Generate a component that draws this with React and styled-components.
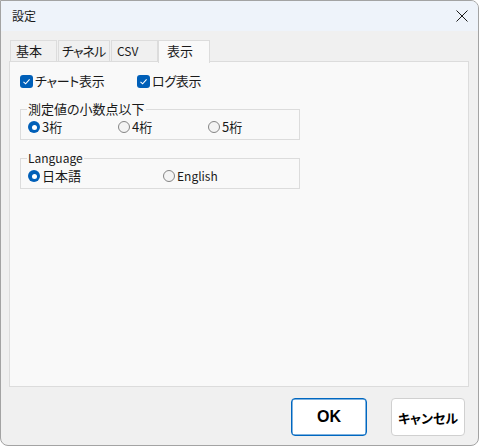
import React from "react"
import styled, { createGlobalStyle } from "styled-components"

const Global = createGlobalStyle`
  html, body { margin: 0; padding: 0; background: #ffffff; }
  body {
    font-family: "Noto Sans CJK JP", "Noto Sans", sans-serif;
    font-size: 13px;
    font-feature-settings: "palt";
    color: #1a1a1a;
  }
  button { font-feature-settings: "palt"; }
`

const Window = styled.div`
  width: 479px;
  height: 446px;
  box-sizing: border-box;
  border: 1px solid #a3a3a3;
  border-radius: 0 8px 8px 8px;
  background: #f0f0f0;
  overflow: hidden;
  display: flex;
  flex-direction: column;
`

const TitleBar = styled.div`
  height: 30px;
  flex: none;
  background: #eef3fa;
  display: flex;
  align-items: center;
  justify-content: space-between;
  padding: 0 9px 0 11px;
`

const Title = styled.span`
  font-size: 12px;
  line-height: 14px;
`

const CloseButton = styled.button`
  border: none;
  background: none;
  padding: 0;
  width: 14px;
  height: 14px;
  display: flex;
  align-items: center;
  justify-content: center;
`

const Body = styled.div`
  flex: 1;
  display: flex;
  flex-direction: column;
  padding: 9px 9px 9px 8px;
`

const TabStrip = styled.div`
  display: flex;
  align-items: flex-end;
  padding-left: 1px;
  height: 21px;
`

const Tab = styled.div`
  width: ${p => p.$w}px;
  box-sizing: border-box;
  height: ${p => (p.$active ? 23 : 21)}px;
  margin-left: ${p => (p.$active ? -1 : 0)}px;
  margin-bottom: ${p => (p.$active ? -2 : 0)}px;
  padding: ${p => (p.$active ? "2px 0 0 8px" : p.$tight ? "2px 0 0 3px" : "2px 0 0 5px")};
  border: 1px solid #dcdcdc;
  border-bottom: none;
  margin-right: ${p => (p.$active ? 0 : 1)}px;
  background: ${p => (p.$active ? "#f9f9f9" : "#f0f0f0")};
  position: relative;
  z-index: ${p => (p.$active ? 2 : 0)};
  line-height: 16px;
  font-size: ${p => (p.$latin ? 12 : 13)}px;
  letter-spacing: ${p => (p.$tight ? "-0.9px" : "0")};
  white-space: nowrap;
  overflow: hidden;
`

const Panel = styled.div`
  flex: 1;
  background: #f9f9f9;
  border: 1px solid #dcdcdc;
  padding: 11px 10px 0 10px;
  display: flex;
  flex-direction: column;
  align-items: flex-start;
`

const CheckRow = styled.div`
  display: flex;
  height: 16px;
  align-items: center;
`

const CheckItem = styled.label`
  width: ${p => p.$w}px;
  display: flex;
  align-items: center;
  gap: 2px;
  line-height: 16px;
  letter-spacing: -0.3px;
  white-space: nowrap;
`

const CheckBox = styled.span`
  width: 13px;
  height: 13px;
  flex: none;
  border-radius: 3px;
  background: #005fb8;
  display: flex;
  align-items: center;
  justify-content: center;
`

const Group = styled.fieldset`
  margin: ${p => p.$top}px 0 0 0;
  width: 280px;
  box-sizing: border-box;
  border: 1px solid #dcdcdc;
  padding: 2px 7px 3px 7px;
  min-width: 0;
`

const Legend = styled.legend`
  padding: 0 1px;
  margin-left: -1px;
  line-height: 14px;
  font-size: ${p => (p.$latin ? 12 : 13)}px;
`

const RadioRow = styled.div`
  display: flex;
  height: 18px;
  align-items: center;
`

const RadioItem = styled.label`
  width: ${p => p.$w}px;
  display: flex;
  align-items: center;
  gap: 2px;
  line-height: 16px;
  font-size: ${p => (p.$latin ? 12 : 13)}px;
  white-space: nowrap;
`

const RadioDot = styled.span`
  width: 12px;
  height: 12px;
  box-sizing: border-box;
  border-radius: 50%;
  flex: none;
  ${p =>
    p.$on
      ? `background: #005fb8; display: flex; align-items: center; justify-content: center;`
      : `background: #f4f4f4; border: 1px solid #858585;`}
`

const InnerDot = styled.span`
  width: 5px;
  height: 5px;
  border-radius: 50%;
  background: #ffffff;
`

const Footer = styled.div`
  display: flex;
  justify-content: flex-end;
  gap: 24px;
  padding: 11px 4px 0 0;
`

const Button = styled.button`
  width: ${p => p.$w}px;
  height: 38px;
  box-sizing: border-box;
  border-radius: 4px;
  background: #ffffff;
  border: 1px solid ${p => (p.$primary ? "#0067c0" : "#d0d0d0")};
  box-shadow: ${p => (p.$primary ? "inset 0 0 0 0.5px #0067c0" : "none")};
  font-family: ${p => (p.$primary ? '"Liberation Sans", sans-serif' : '"Noto Sans CJK JP", sans-serif')};
  font-size: ${p => (p.$primary ? 16 : 13)}px;
  font-weight: 700;
  color: #000000;
  padding: 0;
`

const Check = () => (
  <svg width="9" height="9" viewBox="0 0 9 9">
    <path d="M1.5 4.8 L3.6 6.8 L7.6 2.3" fill="none" stroke="#fff" strokeWidth="1.1" />
  </svg>
)

const Radio = ({ on, w, latin, children }) => (
  <RadioItem $w={w} $latin={latin}>
    <RadioDot $on={on}>{on && <InnerDot />}</RadioDot>
    {children}
  </RadioItem>
)

export default function App() {
  return (
    <>
      <Global />
      <Window>
        <TitleBar>
          <Title>設定</Title>
          <CloseButton>
            <svg width="12" height="12" viewBox="0 0 12 12">
              <path d="M0.5 0.5 L11.5 11.5 M11.5 0.5 L0.5 11.5" stroke="#1a1a1a" strokeWidth="1" />
            </svg>
          </CloseButton>
        </TitleBar>
        <Body>
          <TabStrip>
            <Tab $w={47}>基本</Tab>
            <Tab $w={52} $tight>チャネル</Tab>
            <Tab $w={47} $latin>CSV</Tab>
            <Tab $w={52} $active>表示</Tab>
          </TabStrip>
          <Panel>
            <CheckRow>
              <CheckItem $w={117}>
                <CheckBox><Check /></CheckBox>
                チャート表示
              </CheckItem>
              <CheckItem $w={80}>
                <CheckBox><Check /></CheckBox>
                ログ表示
              </CheckItem>
            </CheckRow>
            <Group $top={13}>
              <Legend>測定値の小数点以下</Legend>
              <RadioRow>
                <Radio on w={90}>3桁</Radio>
                <Radio w={90}>4桁</Radio>
                <Radio w={80}>5桁</Radio>
              </RadioRow>
            </Group>
            <Group $top={11}>
              <Legend $latin>Language</Legend>
              <RadioRow>
                <Radio on w={135}>日本語</Radio>
                <Radio w={100} latin>English</Radio>
              </RadioRow>
            </Group>
          </Panel>
          <Footer>
            <Button $primary $w={76}>OK</Button>
            <Button $w={74}>キャンセル</Button>
          </Footer>
        </Body>
      </Window>
    </>
  )
}
